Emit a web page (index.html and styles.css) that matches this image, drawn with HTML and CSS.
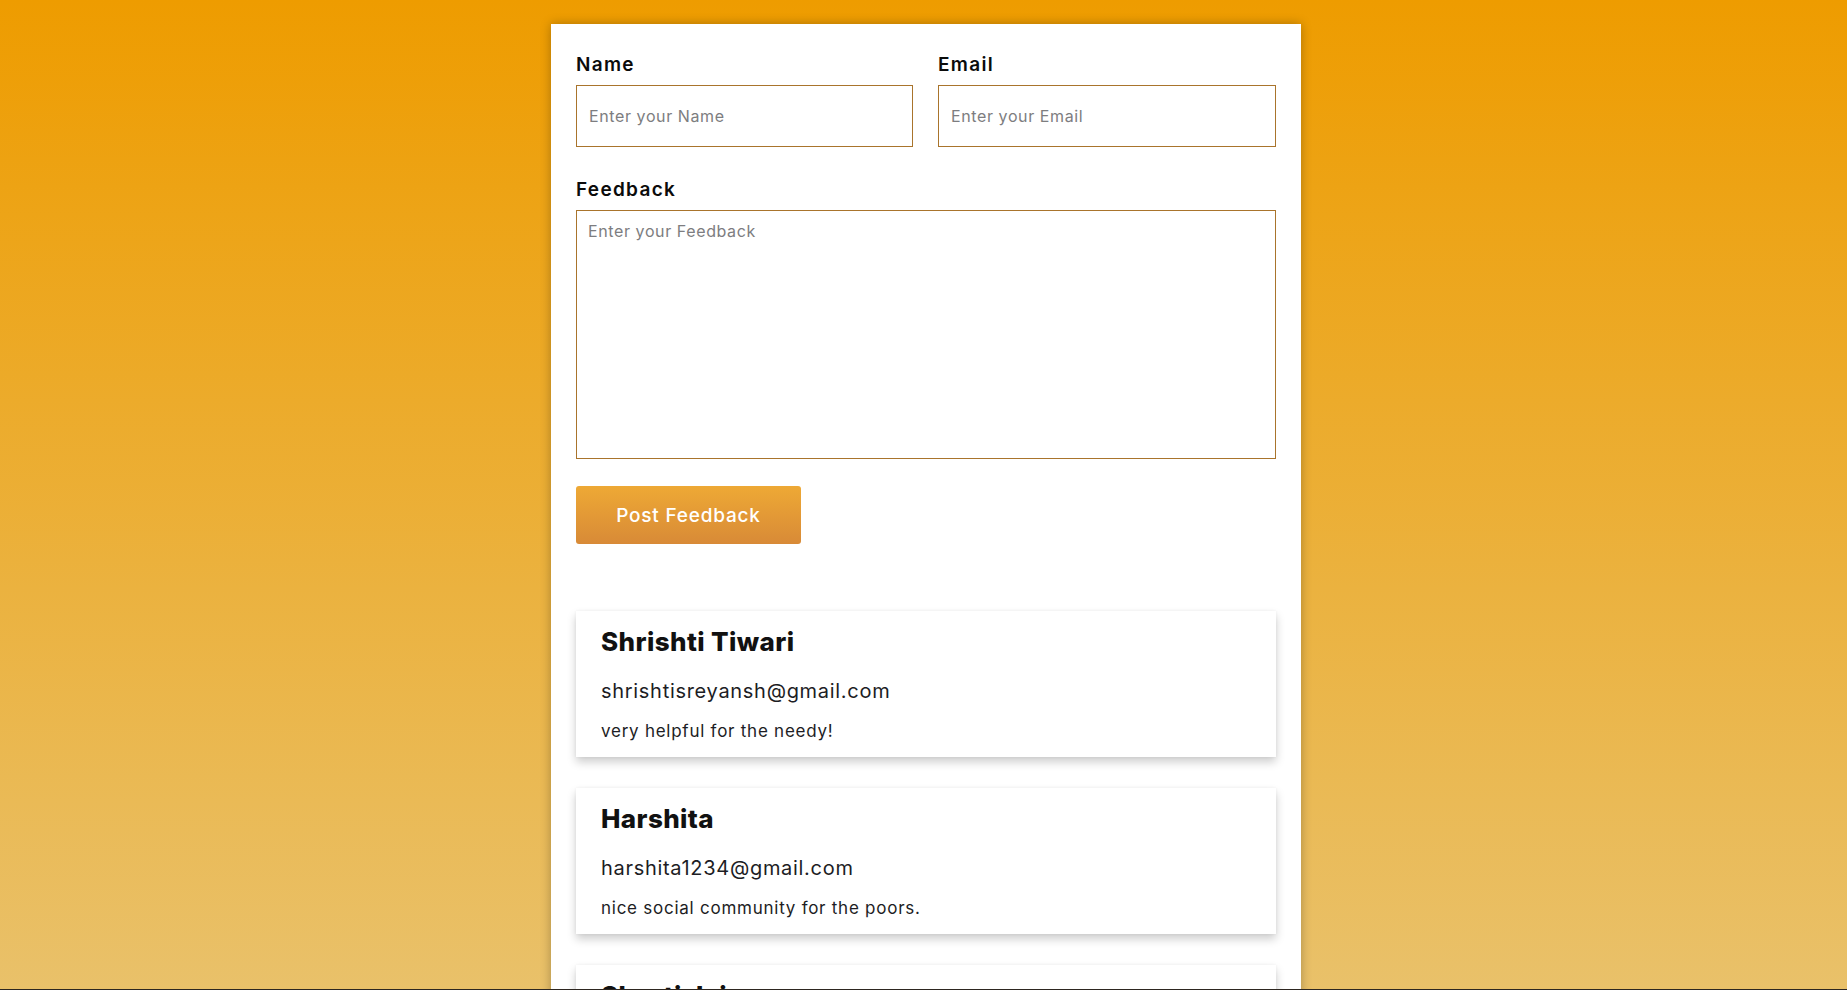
FILE: index.html
```html
<!DOCTYPE html>
<html lang="en">
<head>
<meta charset="utf-8">
<title>Feedback</title>
<link rel="stylesheet" href="styles.css">
</head>
<body>
<main class="page">
  <section class="panel">
    <form class="form">
      <div class="row">
        <div class="field">
          <label class="label" for="name">Name</label>
          <input class="input" id="name" type="text" placeholder="Enter your Name">
        </div>
        <div class="field">
          <label class="label" for="email">Email</label>
          <input class="input" id="email" type="email" placeholder="Enter your Email">
        </div>
      </div>
      <div class="field">
        <label class="label" for="feedback">Feedback</label>
        <textarea class="textarea" id="feedback" placeholder="Enter your Feedback"></textarea>
      </div>
      <button class="btn" type="button">Post Feedback</button>
    </form>
    <div class="list">
      <article class="item">
        <h2 class="item-name">Shrishti Tiwari</h2>
        <p class="item-email">shrishtisreyansh@gmail.com</p>
        <p class="item-text">very helpful for the needy!</p>
      </article>
      <article class="item">
        <h2 class="item-name">Harshita</h2>
        <p class="item-email">harshita1234@gmail.com</p>
        <p class="item-text">nice social community for the poors.</p>
      </article>
      <article class="item">
        <h2 class="item-name">Shruti Jain</h2>
        <p class="item-email">shrutijain@gmail.com</p>
        <p class="item-text">great initiative.</p>
      </article>
    </div>
  </section>
</main>
<div class="bottom-line"></div>
</body>
</html>
```
FILE: styles.css
```css
* { box-sizing: border-box; }
html, body { margin: 0; padding: 0; }
body {
  font-family: "Inter", "Open Sans", sans-serif;
  background: linear-gradient(180deg, #ee9c00 0%, #e9c16a 100%) fixed;
  min-height: 100vh;
  color: #111;
}
.page {
  display: flex;
  justify-content: center;
  padding: 24px 0 0 5px;
}
.panel {
  width: 750px;
  background: #fff;
  padding: 27px 25px 40px;
  box-shadow: 0 0 10px rgba(0,0,0,0.28);
}
.form { display: flex; flex-direction: column; }
.row {
  display: grid;
  grid-template-columns: 337px 338px;
  column-gap: 25px;
}
.field { display: flex; flex-direction: column; }
.label {
  font-size: 19px;
  font-weight: 600;
  line-height: 27px;
  margin-bottom: 7px;
  color: #0b0b0b;
  letter-spacing: 1.3px;
}
.input, .textarea {
  font-family: inherit;
  font-size: 16px;
  letter-spacing: 0.6px;
  border: 1px solid #a9742c;
  background: #fff;
  color: #333;
  outline: none;
}
.input {
  height: 62px;
  padding: 0 12px;
}
.textarea {
  height: 249px;
  padding: 10px 11px;
  resize: none;
}
.input::placeholder, .textarea::placeholder { color: #7d7d80; }
.row + .field { margin-top: 29px; }
.btn {
  margin-top: 27px;
  width: 225px;
  height: 58px;
  border: none;
  border-radius: 3px;
  background: linear-gradient(180deg, #eea935 0%, #d88a37 100%);
  color: #fff;
  font-family: inherit;
  font-size: 19px;
  font-weight: 500;
  letter-spacing: 0.8px;
}
.list {
  margin-top: 67px;
  display: flex;
  flex-direction: column;
  gap: 31px;
}
.item {
  background: #fff;
  padding: 14px 25px 14px;
  box-shadow: 0 5px 9px rgba(0,0,0,0.2), 0 0 3px rgba(0,0,0,0.05);
}
.item-name {
  margin: 0;
  font-size: 26px;
  font-weight: 800;
  line-height: 34px;
  letter-spacing: 0.4px;
  color: #111;
}
.item-email {
  margin: 18px 0 0;
  font-size: 20px;
  line-height: 28px;
  letter-spacing: 0.7px;
  color: #1d1d24;
}
.item-text {
  margin: 14px 0 0;
  font-size: 17px;
  line-height: 24px;
  letter-spacing: 0.75px;
  color: #1d1d24;
}
.bottom-line {
  position: fixed;
  left: 0;
  right: 0;
  bottom: 0;
  height: 1px;
  background: #2d2620;
}
```
